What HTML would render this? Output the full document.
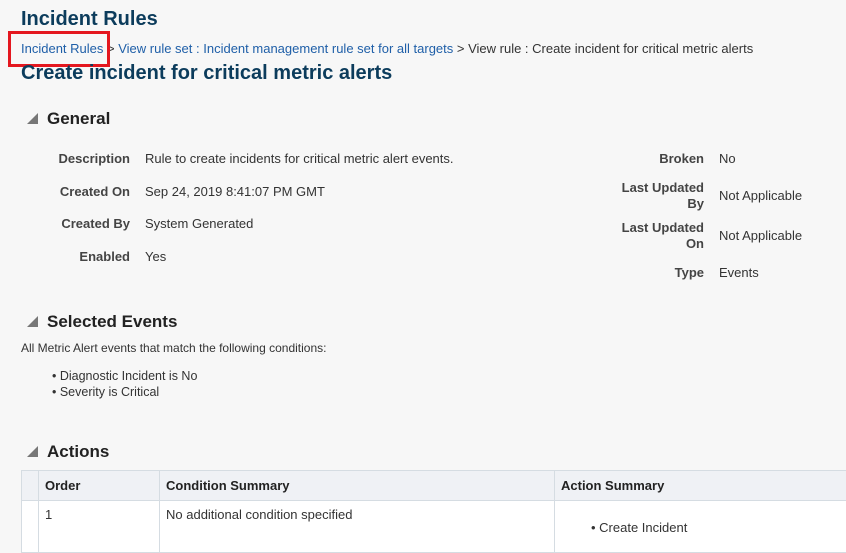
<!DOCTYPE html>
<html><head><style>
body{margin:0;width:846px;height:545px;overflow:hidden;background:#f7f7f7;font-family:"Liberation Sans",Arial,sans-serif;color:#333;font-size:13px;position:relative}
.a{position:absolute;white-space:nowrap}
h1{position:absolute;margin:0;left:21px;top:8px;font-size:20px;color:#0c3c5c;font-weight:bold}
.bc{left:21px;top:41px;font-size:13px;color:#333}
.bc span.l{color:#1f5fa8}
.box{position:absolute;left:8px;top:31px;width:96px;height:30px;border:3px solid #e4171f}
.h2{left:21px;top:62px;font-size:20px;font-weight:bold;color:#0c3c5c}
.sec{font-size:17px;font-weight:bold;color:#222}
.tri{position:absolute;width:0;height:0;border-left:11px solid transparent;border-bottom:11px solid #777}
.lbl{font-weight:bold;color:#444;text-align:right}
table{position:absolute;left:21px;top:470px;border-collapse:collapse;width:830px;font-size:13px;table-layout:fixed}
td,th{border:1px solid #d5dce2;text-align:left;vertical-align:top;padding:0 6px}
th{background:#eff1f5;height:29px;vertical-align:middle;font-weight:bold;color:#222}
td{background:#fff;height:45px;padding-top:6px;color:#333}
</style></head><body>
<h1>Incident Rules</h1>
<div class="a bc"><span class="l">Incident Rules</span> &gt; <span class="l">View rule set : Incident management rule set for all targets</span> &gt; View rule : Create incident for critical metric alerts</div>
<div class="box"></div>
<div class="a h2">Create incident for critical metric alerts</div>

<div class="tri" style="left:27px;top:113px"></div>
<div class="a sec" style="left:47px;top:109px">General</div>
<div class="a lbl" style="right:716px;top:151px">Description</div>
<div class="a" style="left:145px;top:151px">Rule to create incidents for critical metric alert events.</div>
<div class="a lbl" style="right:716px;top:184px">Created On</div>
<div class="a" style="left:145px;top:184px">Sep 24, 2019 8:41:07 PM GMT</div>
<div class="a lbl" style="right:716px;top:216px">Created By</div>
<div class="a" style="left:145px;top:216px">System Generated</div>
<div class="a lbl" style="right:716px;top:249px">Enabled</div>
<div class="a" style="left:145px;top:249px">Yes</div>

<div class="a lbl" style="right:142px;top:151px">Broken</div>
<div class="a" style="left:719px;top:151px">No</div>
<div class="a lbl" style="right:142px;top:180px;line-height:16px">Last Updated<br>By</div>
<div class="a" style="left:719px;top:188px">Not Applicable</div>
<div class="a lbl" style="right:142px;top:220px;line-height:16px">Last Updated<br>On</div>
<div class="a" style="left:719px;top:228px">Not Applicable</div>
<div class="a lbl" style="right:142px;top:265px">Type</div>
<div class="a" style="left:719px;top:265px">Events</div>

<div class="tri" style="left:27px;top:316px"></div>
<div class="a sec" style="left:47px;top:312px">Selected Events</div>
<div class="a" style="left:21px;top:341px;font-size:12px">All Metric Alert events that match the following conditions:</div>
<div class="a" style="left:52px;top:369px;font-size:12.5px">• Diagnostic Incident is No</div>
<div class="a" style="left:52px;top:385px;font-size:12.5px">• Severity is Critical</div>

<div class="tri" style="left:27px;top:446px"></div>
<div class="a sec" style="left:47px;top:442px">Actions</div>
<table>
<colgroup><col style="width:17px"><col style="width:121px"><col style="width:395px"><col></colgroup>
<tr><th style="padding:0"></th><th>Order</th><th>Condition Summary</th><th>Action Summary</th></tr>
<tr><td style="padding:0"></td><td>1</td><td>No additional condition specified</td><td><div style="margin:13px 0 0 30px">• Create Incident</div></td></tr>
</table>
</body></html>
